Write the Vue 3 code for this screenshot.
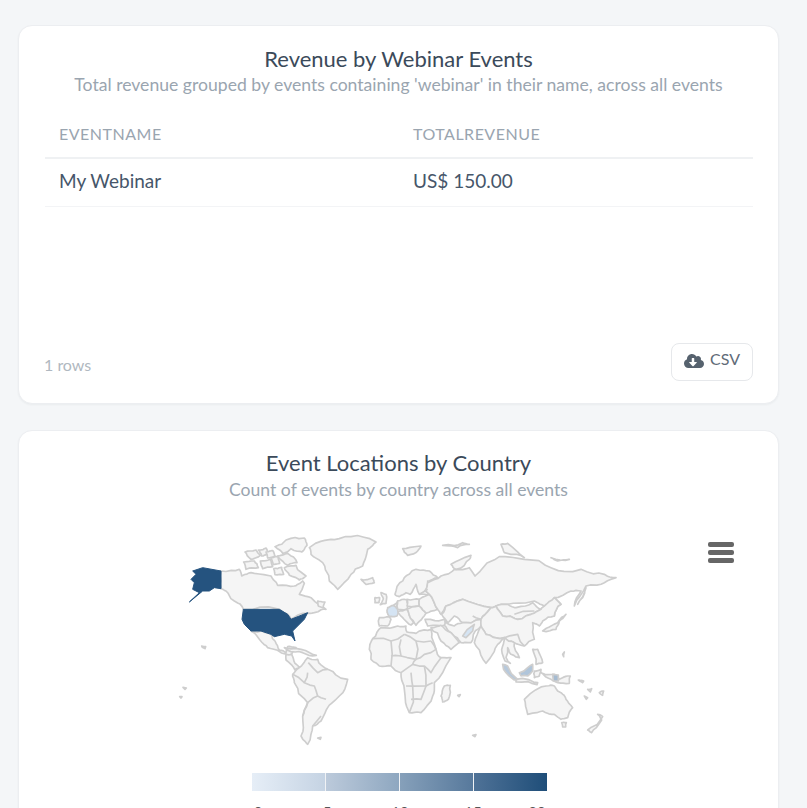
<script setup>
// Outlines are written as "x y" pairs on a 1380×690 map; edges get a small
// deterministic wobble so coastlines read like a detailed low-res map.
const hash = (a, b) => {
  const s = Math.sin(a * 12.9898 + b * 78.233) * 43758.5453;
  return s - Math.floor(s) - 0.5;
};
const wobble = (p, q, depth) => {
  if (depth === 0) return [];
  const [a, b] = p[0] < q[0] || (p[0] === q[0] && p[1] < q[1]) ? [p, q] : [q, p];
  const len = Math.hypot(a[0] - b[0], a[1] - b[1]);
  const mx = (a[0] + b[0]) / 2 + hash(a[0] + b[0], a[1]) * len * 0.22;
  const my = (a[1] + b[1]) / 2 + hash(a[1] + b[1], b[0]) * len * 0.22;
  const m = [mx, my];
  return [...wobble(p, m, depth - 1), m, ...wobble(m, q, depth - 1)];
};
const toPath = (str, closed = true, depth = 2) => {
  const n = str.trim().split(/[\s,]+/).map(Number);
  const pts = [];
  for (let i = 0; i < n.length; i += 2) pts.push([n[i], n[i + 1]]);
  const out = [pts[0]];
  const last = closed ? pts.length : pts.length - 1;
  for (let i = 0; i < last; i++) {
    const p = pts[i];
    const q = pts[(i + 1) % pts.length];
    const d = Math.hypot(p[0] - q[0], p[1] - q[1]) > 12 ? depth : 0;
    out.push(...wobble(p, q, d), q);
  }
  return 'M' + out.map((v) => v[0].toFixed(1) + ' ' + v[1].toFixed(1)).join('L') + (closed ? 'Z' : '');
};

const land = [
  // Canada
  '150 135 205 130 212 150 240 140 300 150 320 178 370 180 395 165 400 172 385 205 420 215 465 250 430 260 410 262 360 280 350 265 325 250 217 250 190 225 165 195 150 188',
  // Greenland, Iceland, Arctic Canada
  '415 65 480 40 540 32 615 48 590 70 575 120 540 145 500 190 475 165 455 110 420 85',
  '570 160 605 155 610 170 585 175',
  '222 78 255 72 268 88 240 100',
  '262 72 285 66 292 84 272 90',
  '285 78 305 74 312 90 290 96',
  '218 108 250 105 262 125 225 130',
  '268 105 298 100 305 122 275 128',
  '300 96 322 92 326 112 306 116',
  '312 62 345 42 400 36 408 58 392 78 360 68 335 82',
  '320 90 350 82 378 110 350 118',
  '340 125 375 118 405 150 385 162 355 148',
  '308 128 332 124 338 145 312 146',
  // Newfoundland
  '440 225 462 228 455 245 442 240',
  // Mexico, Central America, Caribbean
  '240 315 270 315 300 325 312 345 325 372 345 380 350 362 375 365 362 385 345 385 330 380 290 365 265 340',
  '345 385 362 385 372 412 388 425 372 432 345 402',
  '340 365 390 370 436 388 395 380 350 373',
  // South America
  '385 425 410 395 440 400 470 430 530 460 505 510 470 545 450 585 425 600 410 655 390 630 395 570 410 530 370 470 365 445',
  // Africa
  '630 305 680 300 705 300 708 318 735 322 780 310 795 370 810 395 840 395 790 470 785 510 750 560 715 560 700 490 690 440 660 420 625 420 600 400 595 370 605 338',
  // Madagascar
  '820 480 838 478 832 520 815 528 810 510',
  // Europe
  '625 275 655 272 660 280 650 300 625 300 622 285',
  '668 238 680 225 680 250',
  '680 225 708 222 708 250 680 250',
  '708 220 745 220 745 240 708 240',
  '680 258 708 250 715 268 728 290 720 297 695 275',
  '708 250 745 240 765 262 755 275 735 298 715 268',
  '745 220 775 205 800 250 765 262 745 240',
  '675 195 700 155 735 130 775 135 800 155 770 165 762 195 775 205 745 205 735 175 718 205 705 200 685 212 672 205',
  '630 200 645 205 645 232 628 236 637 218',
  '612 215 626 215 624 230 612 230',
  '762 280 820 280 825 297 770 300',
  // Russia
  '770 170 810 150 850 130 895 125 912 150 985 92 1060 100 1140 125 1230 130 1300 145 1335 155 1300 170 1245 180 1210 240 1230 195 1200 195 1150 215 1170 235 1150 270 1120 240 1090 225 1010 235 975 240 960 245 875 220 825 240 810 265 800 250 775 205 762 195',
  // Central Asia, Middle East
  '825 240 875 220 960 245 930 280 875 290 850 270 830 290 812 265',
  '822 285 850 300 875 290 930 280 930 300 910 320 900 350 870 350 840 320 820 298',
  '780 305 810 298 840 320 865 350 840 370 810 345',
  // Mongolia, China
  '975 240 1010 235 1035 245 1085 230 1110 250 1080 265 1040 280 995 270',
  '960 245 975 240 995 270 1040 280 1080 265 1110 250 1120 240 1150 215 1170 235 1150 270 1115 285 1105 300 1085 290 1090 340 1060 360 1030 350 1000 335 945 325 930 300 930 280',
  // India and south-east Asia
  '910 350 930 300 945 325 1000 335 990 345 980 355 945 412 915 360',
  '1000 335 1030 350 1045 395 1020 385 1010 365 1005 395 1018 412 1002 405 995 360',
  // Arctic Russia
  '840 115 900 88 895 100 855 130',
  '815 58 875 50 895 55 860 65',
  '695 68 750 60 740 75 710 88',
  '990 55 1010 52 1060 95 1000 80',
  '1140 95 1195 100 1160 105',
  // Japan, Philippines, Sakhalin, Indonesia
  '1115 315 1160 290 1185 265 1165 285 1155 310',
  '1085 370 1100 370 1115 410 1095 415',
  '1220 235 1245 185 1235 215',
  '1035 460 1100 470 1098 476 1035 468',
  '1090 435 1110 430 1105 450 1090 455',
  '1110 440 1150 445 1165 460 1198 450 1195 472 1160 470 1140 460',
  // Australia, Tasmania, NZ
  '1060 520 1125 480 1150 480 1160 495 1170 500 1185 520 1205 545 1190 575 1170 580 1150 565 1115 555 1070 565',
  '1172 590 1186 590 1184 603 1175 603',
  '1250 612 1295 572 1280 565 1292 582 1262 620',
  // Small islands
  '1175 385 1180 378 1178 392',
  '1222 462 1238 465 1235 470',
  '1250 490 1262 488 1258 498',
  '1285 500 1298 495 1295 508',
  '1240 510 1250 515 1246 520',
  '905 628 915 626 912 632',
  '860 508 868 506 864 512',
  '92 360 104 362 102 368',
  '36 484 46 486 42 490',
  '26 512 33 512 30 516',
  '440 636 450 634 448 640',
].map((s) => toPath(s));

const lines = [
  // South America
  '410 440 400 470 430 480 440 510 465 520', '365 445 400 470', '410 530 440 510', '395 570 410 530', '425 600 450 570', '412 410 440 440 470 430',
  // Africa
  '605 338 660 345 700 325', '660 345 660 420', '690 340 690 390 660 390', '700 325 735 345 735 400', '735 345 780 345', '780 345 795 370',
  '690 390 735 400 760 385 795 370', '690 440 725 415 735 400', '725 415 760 420 780 440 810 395', '705 480 765 480 785 470', '720 440 725 480 715 560', '760 420 765 480 750 520 720 520',
  // Asia / Europe
  '770 190 745 205', '1030 265 1090 255', '905 270 930 280', '1060 360 1040 325 1000 335',
].map((s) => toPath(s, false, 1));

const tinted = [
  { d: toPath('650 245 668 238 680 250 678 270 655 272 648 258'), fill: '#d5e4f3' },
  { d: toPath('875 330 910 295 905 315 885 335', true, 1), fill: '#d5e4f3' },
  { d: toPath('995 415 1010 420 1040 460 1030 462 1005 440', true, 1), fill: '#b7c9dc' },
  { d: toPath('1045 440 1070 425 1085 415 1085 435 1070 450 1050 450', true, 1), fill: '#b0c5da' },
  { d: toPath('1145 445 1162 447 1162 465 1147 465', true, 0), fill: '#a5bbd1' },
];
const alaska = toPath('150 135 150 188 130 185 115 195 95 195 55 228 85 200 65 190 70 170 60 160 75 145 65 135 95 125', true, 0);
const usa = toPath('217 250 325 250 350 265 360 280 410 260 400 280 380 300 365 315 372 345 362 330 340 325 310 332 300 325 270 315 240 315 220 295 213 280', true, 0);

const stops = [0, 1, 2, 3];
const ticks = ['0', '5', '10', '15', '20'];
</script>

<template>
  <div class="page">
    <section class="card first">
      <h2>Revenue by Webinar Events</h2>
      <p class="sub">Total revenue grouped by events containing 'webinar' in their name, across all events</p>
      <table>
        <thead>
          <tr><th class="c1">EVENTNAME</th><th>TOTALREVENUE</th></tr>
        </thead>
        <tbody>
          <tr><td>My Webinar</td><td>US$ 150.00</td></tr>
        </tbody>
      </table>
      <div class="foot">
        <span class="rows">1 rows</span>
        <button class="csv">
          <svg viewBox="0 0 640 512" width="20" height="16" aria-hidden="true"><path fill="#56626e" d="M537.6 226.6c4.1-10.7 6.4-22.4 6.4-34.6 0-53-43-96-96-96-19.7 0-38.1 6-53.3 16.2C367 64.2 315.3 32 256 32c-88.4 0-160 71.6-160 160 0 2.7.1 5.4.2 8.1C40.2 219.8 0 273.2 0 336c0 79.5 64.5 144 144 144h368c70.7 0 128-57.3 128-128 0-61.9-44-113.6-102.4-125.4zm-132.9 88.7L299.3 420.7c-6.2 6.2-16.4 6.2-22.6 0L171.3 315.3c-10.1-10.1-2.9-27.3 11.3-27.3H248V176c0-8.8 7.2-16 16-16h48c8.8 0 16 7.2 16 16v112h65.4c14.2 0 21.4 17.2 11.3 27.3z"/></svg>
          <span>CSV</span>
        </button>
      </div>
    </section>

    <section class="card second">
      <h2>Event Locations by Country</h2>
      <p class="sub second-sub">Count of events by country across all events</p>
      <div class="chart">
        <svg class="map" viewBox="0 0 1380 690" width="460" height="230" aria-label="World map">
          <g fill="#f5f5f5" stroke="#cecece" stroke-width="5" stroke-linejoin="round">
            <path v-for="(d, i) in land" :key="i" :d="d" />
            <path v-for="(d, i) in lines" :key="'b' + i" :d="d" fill="none" />
            <path v-for="t in tinted" :key="t.d" :d="t.d" :fill="t.fill" />
          </g>
          <g fill="#25537f" stroke="#25537f" stroke-width="3" stroke-linejoin="round">
            <path :d="alaska" />
            <path :d="usa" />
          </g>
        </svg>
        <div class="menu" aria-hidden="true"><i></i><i></i><i></i></div>
        <div class="legend">
          <div class="bar">
            <span v-for="s in stops" :key="s" class="seg" :class="'seg' + s"></span>
          </div>
          <div class="ticks"><span v-for="t in ticks" :key="t">{{ t }}</span></div>
        </div>
      </div>
    </section>
  </div>
</template>

<style>
html, body { margin: 0; background: #f4f6f8; overflow: hidden; }
</style>

<style scoped>
.page {
  height: 808px;
  overflow: hidden;
  box-sizing: border-box;
  padding: 25px 28px 0 18px;
  display: flex;
  flex-direction: column;
  gap: 26px;
  font-family: Lato, "Liberation Sans", sans-serif;
}
.card {
  background: #fff;
  border: 1px solid #eceef1;
  border-radius: 14px;
  box-sizing: border-box;
  flex: none;
  box-shadow: 0 1px 2px rgba(40, 50, 60, .05);
}
.first { height: 379px; padding: 19px 26px 0; display: flex; flex-direction: column; }
.second { height: 500px; padding: 18px 26px 0; }
h2 {
  margin: 0;
  text-align: center;
  font-size: 22px;
  line-height: 28px;
  font-weight: 400;
  color: #3b4a5a;
}
.sub {
  margin: 0;
  text-align: center;
  font-size: 17.6px;
  line-height: 24px;
  color: #9aa5b0;
}
.second-sub { margin-top: 1px; }
table { width: 708px; border-collapse: collapse; margin-top: 12px; }
th {
  text-align: left;
  height: 48px;
  padding: 0 14px;
  font-size: 16px;
  font-weight: 400;
  letter-spacing: .5px;
  color: #9aa5b0;
  border-bottom: 2px solid #eff1f3;
}
.c1 { width: 326px; }
td {
  height: 43px;
  padding: 0 14px 4px;
  font-size: 19px;
  color: #46566a;
  border-bottom: 1px solid #f3f4f6;
}
.foot {
  margin-top: auto;
  width: 708px;
  height: 38px;
  margin-bottom: 22px;
  display: flex;
  justify-content: space-between;
  align-items: flex-end;
}
.rows { font-size: 16px; line-height: 32px; color: #b0b8c0; margin-left: -1px; }
.csv {
  width: 82px;
  height: 38px;
  box-sizing: border-box;
  border: 1px solid #e6e8eb;
  border-radius: 8px;
  background: #fff;
  display: flex;
  align-items: center;
  justify-content: center;
  gap: 6px;
  padding: 0 0 2px;
  font: 16px Lato, "Liberation Sans", sans-serif;
  color: #5f6b78;
}
.csv span { position: relative; top: -3px; }
.chart { position: relative; padding-top: 24px; }
.map { display: block; margin-left: 126px; }
.menu {
  position: absolute;
  top: 40px;
  left: 663px;
  width: 26px;
  display: flex;
  flex-direction: column;
  gap: 3px;
}
.menu i { display: block; height: 5px; border-radius: 2px; background: #666; }
.legend { margin: 17px 0 0 207px; width: 295px; }
.bar { display: flex; gap: 1px; height: 18px; background: #f0f2f5; }
.seg { flex: 1; }
.seg0 { background: linear-gradient(90deg, #e6eef7, #c5d3e3); }
.seg1 { background: linear-gradient(90deg, #bccadb, #8ea7c0); }
.seg2 { background: linear-gradient(90deg, #86a0ba, #57799c); }
.seg3 { background: linear-gradient(90deg, #4f7297, #1f4e79); }
.ticks {
  display: grid;
  grid-template-columns: 69px 73px 73px 64px 0;
  padding-left: 6px;
  margin-top: 12px;
  font-size: 15px;
  color: #555;
}
.ticks span { display: flex; justify-content: center; width: 0; }
</style>
